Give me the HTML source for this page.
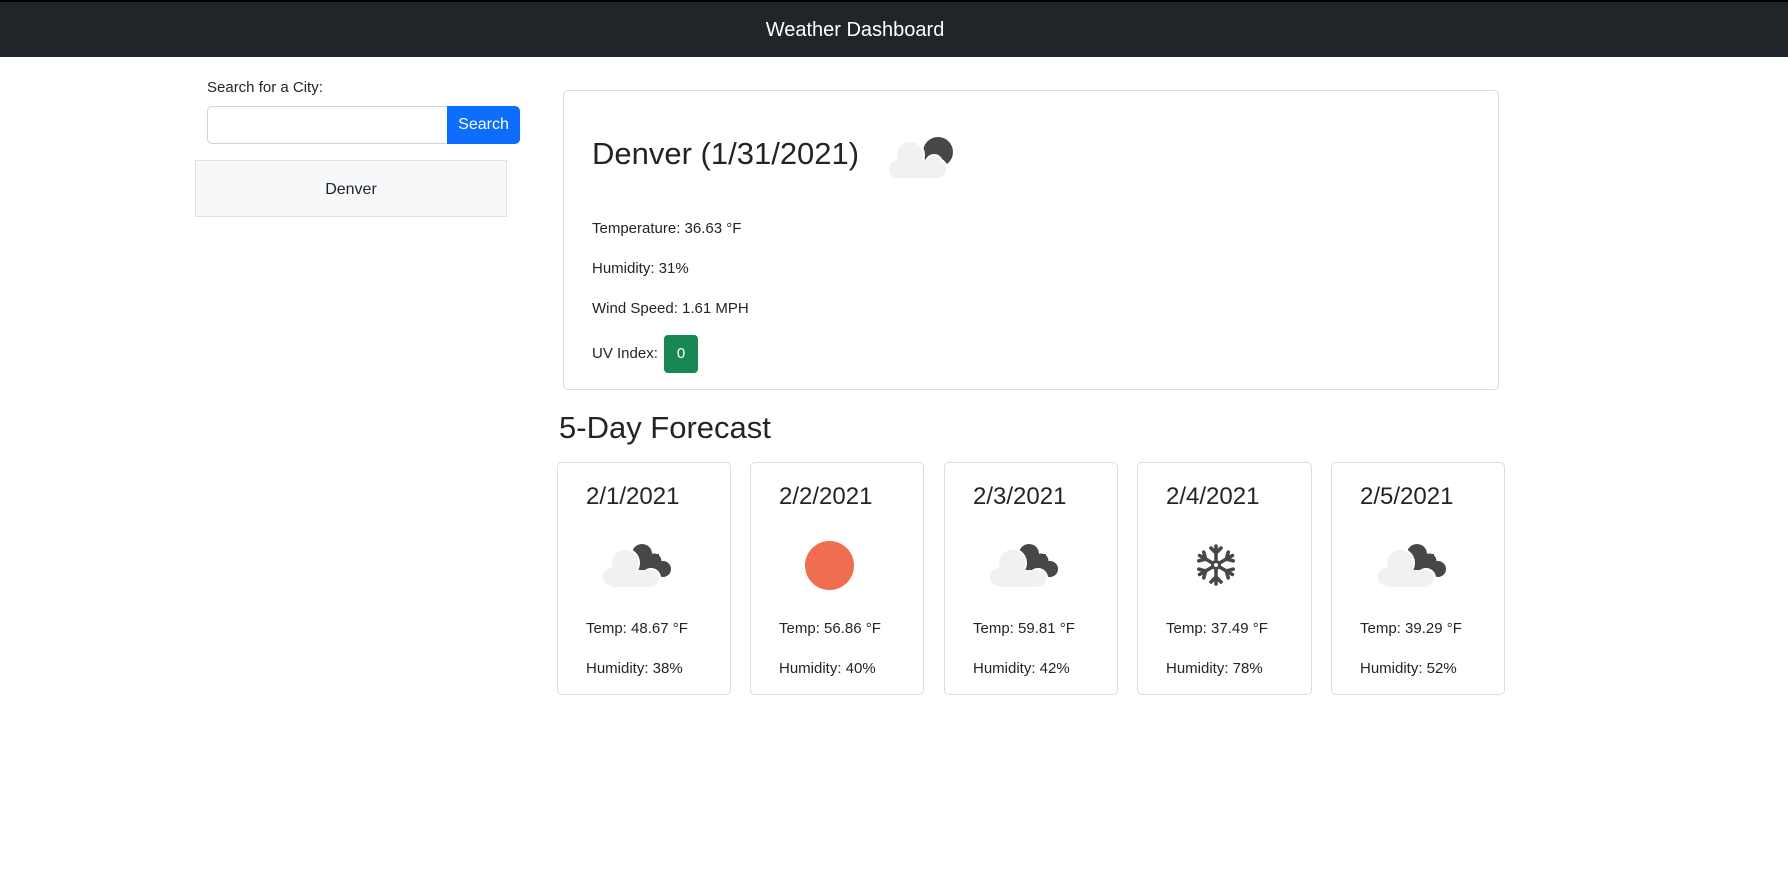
<!DOCTYPE html>
<html><head><meta charset="utf-8"><style>
*{margin:0;padding:0;box-sizing:border-box}
body{width:1788px;height:878px;background:#fff;font-family:"Liberation Sans",sans-serif;color:#212529;position:relative;overflow:hidden}
.a{position:absolute;white-space:nowrap}
.nav{position:absolute;left:0;top:0;width:1788px;height:57px;background:#212529;border-top:2px solid #000}
.card{position:absolute;border:1px solid #dcdcdc;border-radius:5px;background:#fff}
.t{font-size:15px}
.d{font-size:24px;font-weight:500}
</style></head><body>
<div class="nav"></div>
<div class="a" style="left:0;width:1710px;text-align:center;top:19px;color:#fff;font-size:20px">Weather Dashboard</div>

<div class="a t" style="left:207px;top:79px">Search for a City:</div>
<div class="a" style="left:207px;top:106px;width:241px;height:38px;border:1px solid #ced4da;border-radius:5px 0 0 5px"></div>
<div class="a" style="left:447px;top:106px;width:73px;height:38px;background:#0d6efd;border-radius:0 5px 5px 0;color:#fff;font-size:16px;text-align:center;line-height:38px">Search</div>
<div class="a" style="left:195px;top:160px;width:312px;height:57px;background:#f7f8fa;border:1px solid #dfe1e4;font-size:16px;text-align:center;line-height:57px">Denver</div>

<div class="card" style="left:563px;top:90px;width:936px;height:300px"></div>
<div class="a" style="left:592px;top:136px;font-size:31px;font-weight:500">Denver (1/31/2021)</div>
<svg class="a" style="left:886px;top:134px" width="70" height="48" viewBox="0 0 70 48">
<circle cx="52" cy="18" r="15" fill="#474749"/>
<g fill="#f1f1f0" stroke="#fff" stroke-width="2">
<circle cx="24" cy="21" r="14"/><circle cx="12" cy="35" r="10"/><circle cx="51" cy="35" r="10"/><circle cx="48" cy="29" r="8"/><rect x="12" y="30" width="39" height="15"/>
</g>
<g fill="#f1f1f0"><circle cx="24" cy="21" r="13"/><circle cx="12" cy="35" r="9"/><circle cx="51" cy="35" r="9"/><circle cx="48" cy="29" r="7"/><rect x="12" y="26" width="39" height="18"/></g>
</svg>
<div class="a t" style="left:592px;top:220px">Temperature: 36.63 °F</div>
<div class="a t" style="left:592px;top:260px">Humidity: 31%</div>
<div class="a t" style="left:592px;top:300px">Wind Speed: 1.61 MPH</div>
<div class="a t" style="left:592px;top:345px">UV Index:</div>
<div class="a" style="left:664px;top:335px;width:34px;height:38px;background:#198754;border-radius:4px;color:#fff;font-size:15px;text-align:center;line-height:38px">0</div>

<div class="a" style="left:559px;top:410px;font-size:31px;font-weight:500">5-Day Forecast</div>

<div class="card" style="left:557px;top:462px;width:174px;height:233px"></div>
<div class="card" style="left:750px;top:462px;width:174px;height:233px"></div>
<div class="card" style="left:944px;top:462px;width:174px;height:233px"></div>
<div class="card" style="left:1137px;top:462px;width:175px;height:233px"></div>
<div class="card" style="left:1331px;top:462px;width:174px;height:233px"></div>

<div class="a d" style="left:586px;top:483px">2/1/2021</div>
<div class="a d" style="left:779px;top:483px">2/2/2021</div>
<div class="a d" style="left:973px;top:483px">2/3/2021</div>
<div class="a d" style="left:1166px;top:483px">2/4/2021</div>
<div class="a d" style="left:1360px;top:483px">2/5/2021</div>

<svg width="0" height="0" style="position:absolute"><defs>
<g id="c">
<g fill="#474749"><circle cx="41" cy="10" r="10"/><circle cx="53" cy="17" r="7.5"/><circle cx="62" cy="25" r="8"/><rect x="34" y="10" width="24" height="20"/></g>
<g fill="#f1f1f0" stroke="#fff" stroke-width="2"><circle cx="24" cy="19" r="14"/><circle cx="11" cy="33" r="10"/><circle cx="50" cy="34" r="9"/><rect x="11" y="30" width="39" height="13"/></g>
<g fill="#f1f1f0"><circle cx="24" cy="19" r="13"/><circle cx="11" cy="33" r="9"/><circle cx="50" cy="34" r="8"/><rect x="11" y="26" width="39" height="17"/></g>
</g></defs></svg>
<svg class="a" style="left:601px;top:544px" width="72" height="45"><use href="#c"/></svg>
<svg class="a" style="left:988px;top:544px" width="72" height="45"><use href="#c"/></svg>
<svg class="a" style="left:1376px;top:544px" width="72" height="45"><use href="#c"/></svg>
<div class="a" style="left:805px;top:541px;width:49px;height:49px;border-radius:50%;background:#ee6e4f"></div>
<svg class="a" style="left:1196px;top:544px" width="40" height="42" viewBox="-20 -21 40 42">
<g stroke="#474749" stroke-width="3.6" stroke-linecap="round" fill="none">
<g id="arm"><line x1="0" y1="-4" x2="0" y2="-19"/><polyline points="-5,-17 0,-12 5,-17"/></g>
<use href="#arm" transform="rotate(60)"/><use href="#arm" transform="rotate(120)"/><use href="#arm" transform="rotate(180)"/><use href="#arm" transform="rotate(240)"/><use href="#arm" transform="rotate(300)"/>
<circle cx="0" cy="0" r="3.5" stroke-width="3"/>
</g></svg>

<div class="a t" style="left:586px;top:620px">Temp: 48.67 °F</div>
<div class="a t" style="left:779px;top:620px">Temp: 56.86 °F</div>
<div class="a t" style="left:973px;top:620px">Temp: 59.81 °F</div>
<div class="a t" style="left:1166px;top:620px">Temp: 37.49 °F</div>
<div class="a t" style="left:1360px;top:620px">Temp: 39.29 °F</div>
<div class="a t" style="left:586px;top:660px">Humidity: 38%</div>
<div class="a t" style="left:779px;top:660px">Humidity: 40%</div>
<div class="a t" style="left:973px;top:660px">Humidity: 42%</div>
<div class="a t" style="left:1166px;top:660px">Humidity: 78%</div>
<div class="a t" style="left:1360px;top:660px">Humidity: 52%</div>
</body></html>
